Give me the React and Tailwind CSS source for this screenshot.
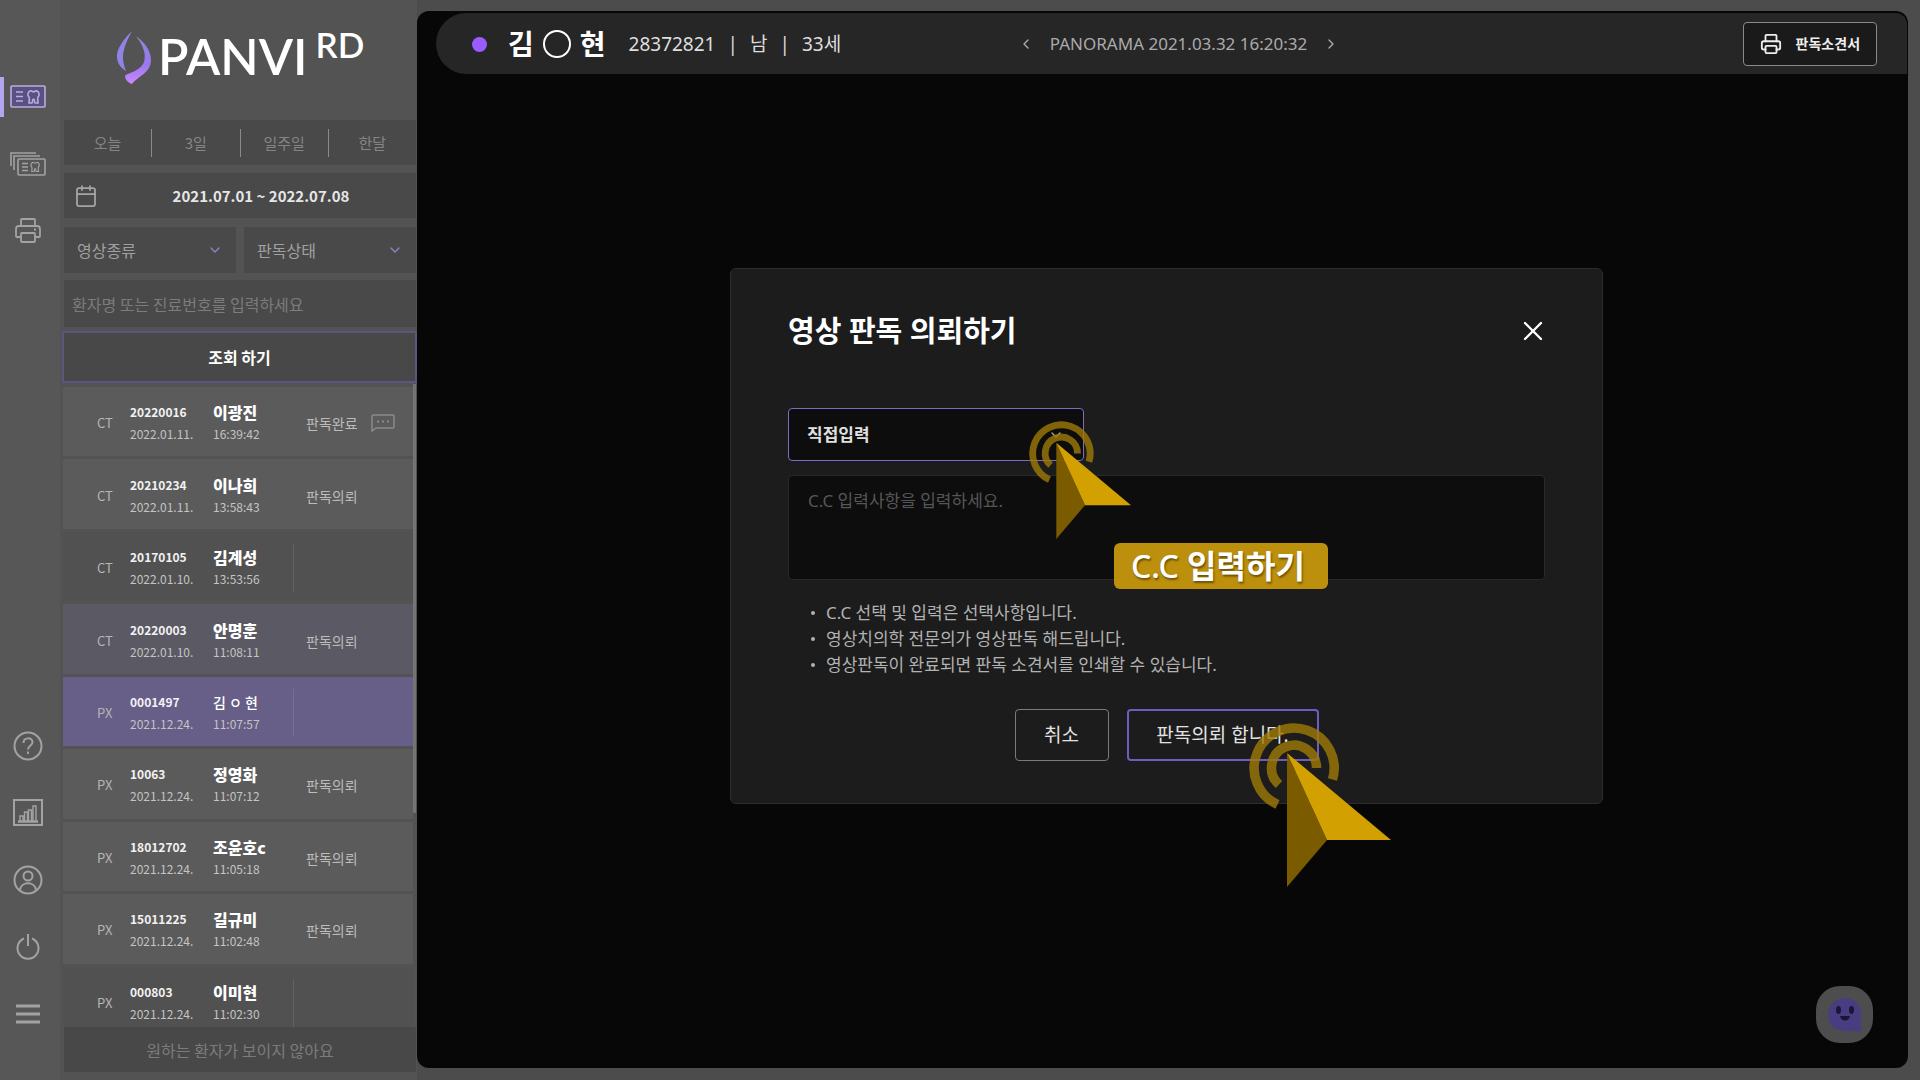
import { useState } from "react";
import { ChevronDown, ChevronLeft, ChevronRight, Calendar, Printer, X } from "lucide-react";

const patients = [
  { type: "CT", id: "20220016", date: "2022.01.11.", name: "이광진", time: "16:39:42", status: "판독완료", memo: true },
  { type: "CT", id: "20210234", date: "2022.01.11.", name: "이나희", time: "13:58:43", status: "판독의뢰" },
  { type: "CT", id: "20170105", date: "2022.01.10.", name: "김계성", time: "13:53:56", status: "" },
  { type: "CT", id: "20220003", date: "2022.01.10.", name: "안명훈", time: "11:08:11", status: "판독의뢰", hovered: true },
  { type: "PX", id: "0001497", date: "2021.12.24.", name: "김 ㅇ 현", time: "11:07:57", status: "", selected: true },
  { type: "PX", id: "10063", date: "2021.12.24.", name: "정영화", time: "11:07:12", status: "판독의뢰" },
  { type: "PX", id: "18012702", date: "2021.12.24.", name: "조윤호c", time: "11:05:18", status: "판독의뢰" },
  { type: "PX", id: "15011225", date: "2021.12.24.", name: "길규미", time: "11:02:48", status: "판독의뢰" },
  { type: "PX", id: "000803", date: "2021.12.24.", name: "이미현", time: "11:02:30", status: "" },
];

const periods = ["오늘", "3일", "일주일", "한달"];

const notices = [
  "C.C 선택 및 입력은 선택사항입니다.",
  "영상치의학 전문의가 영상판독 해드립니다.",
  "영상판독이 완료되면 판독 소견서를 인쇄할 수 있습니다.",
];

const rowColor = (patient) => {
  if (patient.selected) return "bg-[#675f88]";
  if (patient.hovered) return "bg-[#5b5963]";
  return patient.status ? "bg-[#5b5b5b]" : "bg-[#515151]";
};

const TOOTH = "M20 6c-2 1-3 4-1 6 1 2 0 3 0 6h3c1-1 0-4 1.500-4s.5 3 1.500 4h3c0-3-1-4 0-6 2-2 1-5-1-6-1.500-.5-2 .8-3.500.8S21.500 5.500 20 6z";

const CardIcon = () => (
  <svg className="h-6 w-9" viewBox="0 0 36 24" fill="none" stroke="currentColor" strokeWidth="1.6">
    <rect x="1" y="1" width="34" height="21" rx="1" fill="#5a5182" />
    <path d="M6 7h7M6 11.500h7M6 16h7" />
    <path d={TOOTH} />
  </svg>
);

const CardsIcon = () => (
  <svg className="h-6 w-9" viewBox="0 0 36 24" fill="none" stroke="currentColor" strokeWidth="1.6">
    <path d="M1 14V1h25M4 18V4h26" />
    <rect x="8" y="7" width="27" height="16" rx="1" />
    <path d="M12 11.500h6M12 15h6M12 18.500h6" />
    <path d={TOOTH} transform="translate(7.500 6) scale(.75)" />
  </svg>
);

const PrinterIcon = () => (
  <svg className="size-7" viewBox="0 0 28 28" fill="none" stroke="currentColor" strokeWidth="1.8" strokeLinejoin="round">
    <path d="M7 8V3q0-1 1-1h12q1 0 1 1v5M7 20H3q-1 0-1-1v-7q0-3 3-3h18q3 0 3 3v7q0 1-1 1h-4" />
    <rect x="7" y="16" width="14" height="9" rx="1" />
    <path d="M20 12.500h2" />
  </svg>
);

const HelpIcon = () => (
  <svg className="size-8" viewBox="0 0 32 32" fill="none" stroke="currentColor" strokeWidth="2">
    <circle cx="16" cy="16" r="13.500" />
    <path d="M11.500 13c0-6 9-6 9-1 0 4-4.500 3.500-4.500 7.500" />
    <path d="M16 21.500v2.500" />
  </svg>
);

const ChartIcon = () => (
  <svg className="size-8" viewBox="0 0 32 32" fill="none" stroke="currentColor" strokeWidth="2">
    <rect x="2" y="3" width="28" height="25" />
    <path d="M6 24.500h20" strokeWidth="2.500" />
    <path d="M8 24v-5h3v5M12.500 24v-9h3v9M16.500 24V13h3v11M21 24V9h3v15" strokeWidth="1.400" />
  </svg>
);

const UserIcon = () => (
  <svg className="size-8" viewBox="0 0 32 32" fill="none" stroke="currentColor" strokeWidth="2">
    <circle cx="16" cy="16" r="13.500" />
    <circle cx="16" cy="12" r="4.500" />
    <path d="M8 26c1-9 15-9 16 0" />
  </svg>
);

const PowerIcon = () => (
  <svg className="size-8" viewBox="0 0 32 32" fill="none" stroke="currentColor" strokeWidth="2">
    <path d="M12 7.500a10.500 10.500 0 1 0 8 0M16 3v12" />
  </svg>
);

const MenuIcon = () => (
  <svg className="size-8" viewBox="0 0 32 32" fill="none" stroke="currentColor" strokeWidth="3">
    <path d="M4 8h24M4 16h24M4 24h24" />
  </svg>
);

const LogoMark = () => (
  <svg className="h-[54px] w-9" viewBox="0 0 36 54">
    <defs>
      <linearGradient id="drop" x1="0" y1="0" x2="0" y2="1">
        <stop offset="0" stopColor="#8d86d8" />
        <stop offset=".6" stopColor="#9a78ee" />
        <stop offset="1" stopColor="#cf86ff" />
      </linearGradient>
    </defs>
    <path fill="#8f83e6" d="M16 1C9 8 0 18 1 28c1 8 6 11 9 13-3-8-4-14-2-21 2-8 5-13 8-19z" />
    <path fill="url(#drop)" d="M20 6c8 6 15 14 15 24 0 13-13 16-19 24-3-1-7-4-7-8 1-3 15-4 19-14 3-10-3-19-8-26z" />
  </svg>
);

const ClickPointer = ({ className }) => (
  <svg className={className} viewBox="0 0 142 164" fill="none" aria-hidden="true">
    <g stroke="#a07a08" strokeOpacity=".8" strokeWidth="9.500">
      <path d="M83.500 56.500A40 40 0 1 0 28.500 81.500" />
      <path d="M67.500 45A22.500 22.500 0 1 0 30 61.500" />
    </g>
    <path d="M38 30v134l40-47z" fill="#7a5b00" />
    <path d="M38 30l40 87h64z" fill="#d2a000" />
  </svg>
);

const RailButton = ({ label, active, children }) => (
  <button
    aria-label={label}
    className={`relative flex h-[67px] w-full items-center justify-center pr-1 ${active ? "text-[#b9addf]" : "text-[#a3a3a3]"}`}
  >
    {active && <span className="absolute left-0 h-10 w-1 bg-[#b5a5f0]" />}
    {children}
  </button>
);

const FilterSelect = ({ label }) => (
  <label className="relative flex-1">
    <select
      aria-label={label}
      className="h-[46px] w-full appearance-none bg-[#494949] pl-[13px] text-base leading-6 text-[#a0a0a0]"
    >
      <option>{label}</option>
    </select>
    <ChevronDown className="pointer-events-none absolute right-[13px] top-[15px] size-4 text-[#8f82c8]" />
  </label>
);

const PatientRow = ({ patient }) => (
  <tr className={rowColor(patient)}>
    <td className="w-[67px] pl-[34px] pt-[3px] text-[13px] leading-[22px] text-[#b5b5b5]">{patient.type}</td>
    <td className="w-[83px] pt-[3px]">
      <p className="text-xs font-bold leading-[22px] text-[#f2f2f2]">{patient.id}</p>
      <p className="text-xs leading-[22px] text-[#c4c4c4]">{patient.date}</p>
    </td>
    <td className="w-20 pt-[3px]">
      <p className={`leading-[22px] text-white ${patient.selected ? "text-sm font-medium" : "text-base font-black"}`}>{patient.name}</p>
      <p className="text-xs leading-[22px] text-[#c4c4c4]">{patient.time}</p>
    </td>
    <td className="w-[78px] pt-[3px] text-sm leading-[22px] text-[#bcbcbc]">
      <div className={`flex h-12 items-center pl-[13px] ${patient.status ? "" : "border-l border-white/10"}`}>{patient.status}</div>
    </td>
    <td className="pt-[3px] text-[#8b8b8b]">
      {patient.memo && (
        <svg className="h-5 w-6" viewBox="0 0 24 20" fill="none" stroke="currentColor" strokeWidth="1.500" role="img" aria-label="메모">
          <path d="M1 18V3q0-1 1-1h20q1 0 1 1v11q0 1-1 1H5z" />
          <path d="M6 8.500h2M11 8.500h2M16 8.500h2" strokeWidth="2" />
        </svg>
      )}
    </td>
  </tr>
);

const Sidebar = () => (
  <aside className="flex w-[357px] shrink-0 flex-col bg-[#535353] pb-2 pl-1 pr-px">
    <div className="flex h-[120px] shrink-0 pl-[52px] pt-[30px] text-white">
      <LogoMark />
      <span className="pl-[6px] font-[Lato] text-[50px] font-semibold leading-[52px]">PANVI</span>
      <span className="pl-2 font-[Lato] text-[35px] font-semibold leading-7">RD</span>
    </div>

    <div className="flex h-[45px] shrink-0 items-center bg-[#494949]">
      {periods.map((period, index) => (
        <button
          key={period}
          className={`h-7 flex-1 text-[15px] leading-6 text-[#858585] ${index > 0 ? "border-l border-[#8a8a8a]" : ""}`}
        >
          {period}
        </button>
      ))}
    </div>

    <button className="mt-2 flex h-[45px] shrink-0 items-center bg-[#494949] pl-[10px]">
      <Calendar className="size-6 text-[#a5a5a5]" strokeWidth={1.75} />
      <span className="flex-1 pl-2 text-[15px] font-bold leading-6 text-[#e6e6e6]">2021.07.01 ~ 2022.07.08</span>
    </button>

    <div className="mt-[9px] flex shrink-0 gap-2">
      <FilterSelect label="영상종류" />
      <FilterSelect label="판독상태" />
    </div>

    <input
      type="text"
      aria-label="환자 검색"
      placeholder="환자명 또는 진료번호를 입력하세요"
      className="mt-[7px] h-[47px] shrink-0 bg-[#494949] px-2 text-base leading-6 placeholder:text-[#7c7c7c]"
    />
    <button className="-ml-0.5 -mr-px mt-1 h-[52px] shrink-0 border-2 border-[#5d557f] bg-[#484848] text-base font-bold leading-6 text-white">
      조회 하기
    </button>

    <div className="-ml-px mt-px flex min-h-0 flex-1 overflow-hidden">
      <table className="h-[655px] flex-1 table-fixed border-separate border-spacing-x-0 border-spacing-y-[3px] text-left" aria-label="환자 목록">
        <tbody>
          {patients.map((patient) => (
            <PatientRow key={patient.id} patient={patient} />
          ))}
        </tbody>
      </table>
      <div className="h-2/3 w-[3px] bg-[#747474]" />
    </div>
    <button className="h-[45px] shrink-0 bg-[#484848] text-base leading-6 text-[#7c7c7c]">원하는 환자가 보이지 않아요</button>
  </aside>
);

const ViewerHeader = () => (
  <header className="ml-[19px] mr-px mt-0.5 flex h-[61px] items-center rounded-l-[32px] rounded-tr-xl bg-[#262626] pl-9 pr-[30px] pt-px text-[#dedede]">
    <div className="flex flex-1 items-center">
      <span className="size-[15px] rounded-full bg-[#9a5cff]" />
      <h1 className="flex items-center gap-[9px] pl-[21px] text-[28px] font-bold leading-9 text-white">
        <span>김</span>
        <span className="size-7 rounded-full border-2 border-white" aria-label="○" />
        <span>현</span>
      </h1>
      <p className="flex gap-3 pl-[23px] text-[19px] leading-6">
        <span>28372821</span>
        <span>|</span>
        <span>남</span>
        <span>|</span>
        <span>33세</span>
      </p>
    </div>
    <div className="ml-2 flex items-center gap-4 text-[#aaaaaa]">
      <button aria-label="이전 영상"><ChevronLeft className="size-4" /></button>
      <span className="text-[17px] leading-6">PANORAMA 2021.03.32 16:20:32</span>
      <button aria-label="다음 영상"><ChevronRight className="size-4" /></button>
    </div>
    <div className="flex flex-1 justify-end">
      <button className="flex h-11 items-center gap-[14px] rounded border border-[#8a8a8a] bg-[#1a1a1a] px-4 text-sm font-bold text-[#eeeeee]">
        <Printer className="size-[22px]" strokeWidth={2} />
        판독소견서
      </button>
    </div>
  </header>
);

const RequestModal = ({ onClose }) => {
  const [comment, setComment] = useState("");

  return (
    <div className="absolute inset-0 flex items-center justify-center pb-[7px] pl-2">
      <div role="dialog" aria-labelledby="request-title" className="relative w-[873px] rounded-md border border-[#2d2d2d] bg-[#1c1c1c] px-[57px] py-[42px]">
        <div className="flex items-center justify-between">
          <h2 id="request-title" className="text-[29px] font-bold leading-10 text-white">영상 판독 의뢰하기</h2>
          <button onClick={onClose} aria-label="닫기" className="-mr-1 text-white">
            <X className="size-8" strokeWidth={1.75} />
          </button>
        </div>

        <div className="relative mt-[57px] w-[296px]">
          <select aria-label="C.C 선택" className="h-[53px] w-full appearance-none rounded border border-[#7d6bc4] bg-[#0d0d0d] pl-[18px] text-[17px] font-bold leading-6 text-[#e0e0e0]">
            <option>직접입력</option>
          </select>
          <ChevronDown className="pointer-events-none absolute right-5 top-[19px] size-4 text-[#b8a878]" />
        </div>
        <textarea
          aria-label="C.C 입력"
          value={comment}
          onChange={(event) => setComment(event.target.value)}
          placeholder="C.C 입력사항을 입력하세요."
          className="mt-[14px] block h-[105px] w-full resize-none rounded border border-[#292929] bg-[#0d0d0d] px-[19px] py-3 text-[17px] leading-[26px] placeholder:text-[#565656]"
        />

        <ul className="mt-5 list-none pl-[23px] text-[17px] leading-[26px] text-[#b2b2b2]">
          {notices.map((notice) => (
            <li key={notice} className="flex items-center gap-[11px]">
              <span className="size-1 rounded-full bg-[#b2b2b2]" />
              {notice}
            </li>
          ))}
        </ul>

        <div className="mt-[31px] flex justify-center gap-[18px] text-[19px] leading-7 text-[#e2e2e2]">
          <button onClick={onClose} className="h-[52px] w-[94px] rounded border border-[#7a7a7a]">취소</button>
          <button className="h-[52px] w-48 rounded border-2 border-[#705cc0]">판독의뢰 합니다.</button>
        </div>

        <ClickPointer className="pointer-events-none absolute left-[298px] top-[152px] h-[118px] w-[102px]" />
        <ClickPointer className="pointer-events-none absolute left-[518px] top-[454px] h-[164px] w-[142px]" />
        <div className="absolute left-[383px] top-[274px] flex h-[46px] w-[214px] items-center rounded-md bg-[#bc900c] pl-[17px] text-[32px] font-medium leading-[44px] text-white [text-shadow:1px_2px_2px_rgba(60,40,0,0.6)]">
          <span>C.C&nbsp;</span>
          <span className="font-bold">입력하기</span>
        </div>
      </div>
    </div>
  );
};

export default function App() {
  const [modalOpen, setModalOpen] = useState(true);

  return (
    <div className="flex h-screen bg-[#4c4c4c] font-['Noto_Sans_CJK_KR','Noto_Sans',sans-serif]">
      <nav className="flex w-[60px] shrink-0 flex-col justify-between bg-[#575757] pb-[33px] pt-[63px]">
        <div>
          <RailButton label="판독 목록" active><CardIcon /></RailButton>
          <RailButton label="영상 목록"><CardsIcon /></RailButton>
          <RailButton label="인쇄"><PrinterIcon /></RailButton>
        </div>
        <div>
          <RailButton label="도움말"><HelpIcon /></RailButton>
          <RailButton label="통계"><ChartIcon /></RailButton>
          <RailButton label="내 정보"><UserIcon /></RailButton>
          <RailButton label="로그아웃"><PowerIcon /></RailButton>
          <RailButton label="메뉴"><MenuIcon /></RailButton>
        </div>
      </nav>

      <Sidebar />

      <main className="relative mb-3 mr-3 mt-[11px] min-w-0 flex-1 overflow-hidden rounded-xl bg-[#070707] font-['Noto_Sans','Noto_Sans_CJK_KR',sans-serif]">
        <ViewerHeader />
        {modalOpen && <RequestModal onClose={() => setModalOpen(false)} />}
        <button aria-label="채팅 상담" className="absolute bottom-[25px] right-[35px] flex size-[57px] items-center justify-center rounded-[24px] bg-[#4d4d4d]">
          <svg className="size-9" viewBox="0 0 36 36">
            <path d="M18 1c10 0 16 7 16 16v10q0 4 2 6-6 3-9 0-4 3-9 1C7 34 1 27 1 18S8 1 18 1z" fill="#483d80" />
            <ellipse cx="11.500" cy="13" rx="2.500" ry="4" fill="#1b1638" />
            <ellipse cx="24.500" cy="13" rx="2.500" ry="4" fill="#1b1638" />
            <path d="M13 19h10c-1 6-9 6-10 0z" fill="#1b1638" />
          </svg>
        </button>
      </main>
    </div>
  );
}
